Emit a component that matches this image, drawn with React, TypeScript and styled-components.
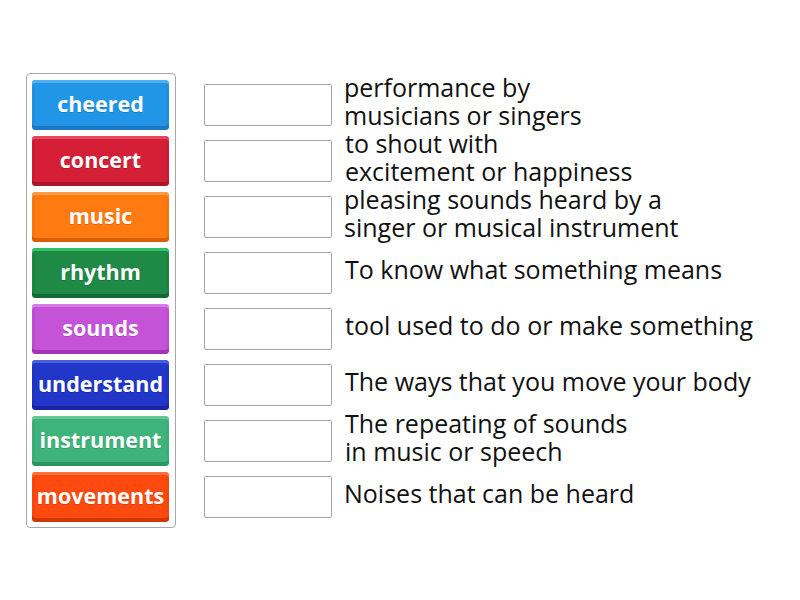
import { FC } from "react";
import styled, { createGlobalStyle } from "styled-components";

const GlobalStyle = createGlobalStyle`
  body {
    margin: 0;
    background: #ffffff;
    font-family: "Open Sans", "Liberation Sans", sans-serif;
  }
`;

const Page = styled.div`
  display: flex;
  align-items: flex-start;
  padding: 73px 0 0 26px;
`;

const TileColumn = styled.div`
  display: flex;
  flex-direction: column;
  gap: 6px;
  padding: 6px 6px 5px 5px;
  border: 1px solid #a8a8a8;
  border-radius: 4px;
`;

const Tile = styled.div<{ $color: string; $light: string; $dark: string }>`
  display: flex;
  align-items: center;
  justify-content: center;
  width: 137px;
  height: 50px;
  box-sizing: border-box;
  border-radius: 4px;
  background: ${(p) => p.$color};
  box-shadow: inset 0 3px 0 ${(p) => p.$light}, inset 0 -4px 0 ${(p) => p.$dark},
    inset 3px 0 0 ${(p) => p.$dark}33, inset -3px 0 0 ${(p) => p.$dark}33;
  color: #ffffff;
  font-size: 21.5px;
  font-weight: 700;
  padding-bottom: 3px;
  white-space: nowrap;
  text-shadow: 0 1px 1px rgba(0, 0, 0, 0.15);
`;

const MatchColumn = styled.div`
  display: flex;
  flex-direction: column;
  gap: 6px;
  padding-top: 7px;
  margin-left: 28px;
`;

const MatchRow = styled.div`
  display: flex;
  align-items: center;
  height: 50px;
`;

const DropBox = styled.div`
  width: 128px;
  height: 42px;
  box-sizing: border-box;
  border: 1px solid #a6a6a6;
  border-radius: 2px;
  flex-shrink: 0;
`;

const Definition = styled.div<{ $indent?: boolean }>`
  margin-left: ${(p) => (p.$indent ? 13 : 12)}px;
  margin-bottom: 8px;
  font-size: 25px;
  line-height: 28px;
  color: #111111;
  white-space: pre-line;
`;

const tiles = [
  { word: "cheered", color: "#2196e6", light: "#4fb0f2", dark: "#1a78c4" },
  { word: "concert", color: "#d41f36", light: "#e5475c", dark: "#aa1628" },
  { word: "music", color: "#ff7b12", light: "#ff9a45", dark: "#d96000" },
  { word: "rhythm", color: "#1e8a46", light: "#2fc463", dark: "#156a34" },
  { word: "sounds", color: "#c553d8", light: "#d67de5", dark: "#a234b6" },
  { word: "understand", color: "#2237c9", light: "#4b5ee0", dark: "#1826a3" },
  { word: "instrument", color: "#3fb37c", light: "#66c898", dark: "#2e9463" },
  { word: "movements", color: "#ff4a0f", light: "#ff7040", dark: "#d13700" },
];

const definitions = [
  { text: "performance by\nmusicians or singers" },
  { text: "to shout with\nexcitement or happiness", indent: true },
  { text: "pleasing sounds heard by a\nsinger or musical instrument" },
  { text: "To know what something means", indent: true },
  { text: "tool used to do or make something", indent: true },
  { text: "The ways that you move your body", indent: true },
  { text: "The repeating of sounds\nin music or speech", indent: true },
  { text: "Noises that can be heard" },
];

export const App: FC = () => {
  return (
    <>
      <GlobalStyle />
      <Page>
        <TileColumn>
          {tiles.map((t) => (
            <Tile key={t.word} $color={t.color} $light={t.light} $dark={t.dark}>
              {t.word}
            </Tile>
          ))}
        </TileColumn>
        <MatchColumn>
          {definitions.map((d, i) => (
            <MatchRow key={i}>
              <DropBox />
              <Definition $indent={d.indent}>{d.text}</Definition>
            </MatchRow>
          ))}
        </MatchColumn>
      </Page>
    </>
  );
};

export default App;
